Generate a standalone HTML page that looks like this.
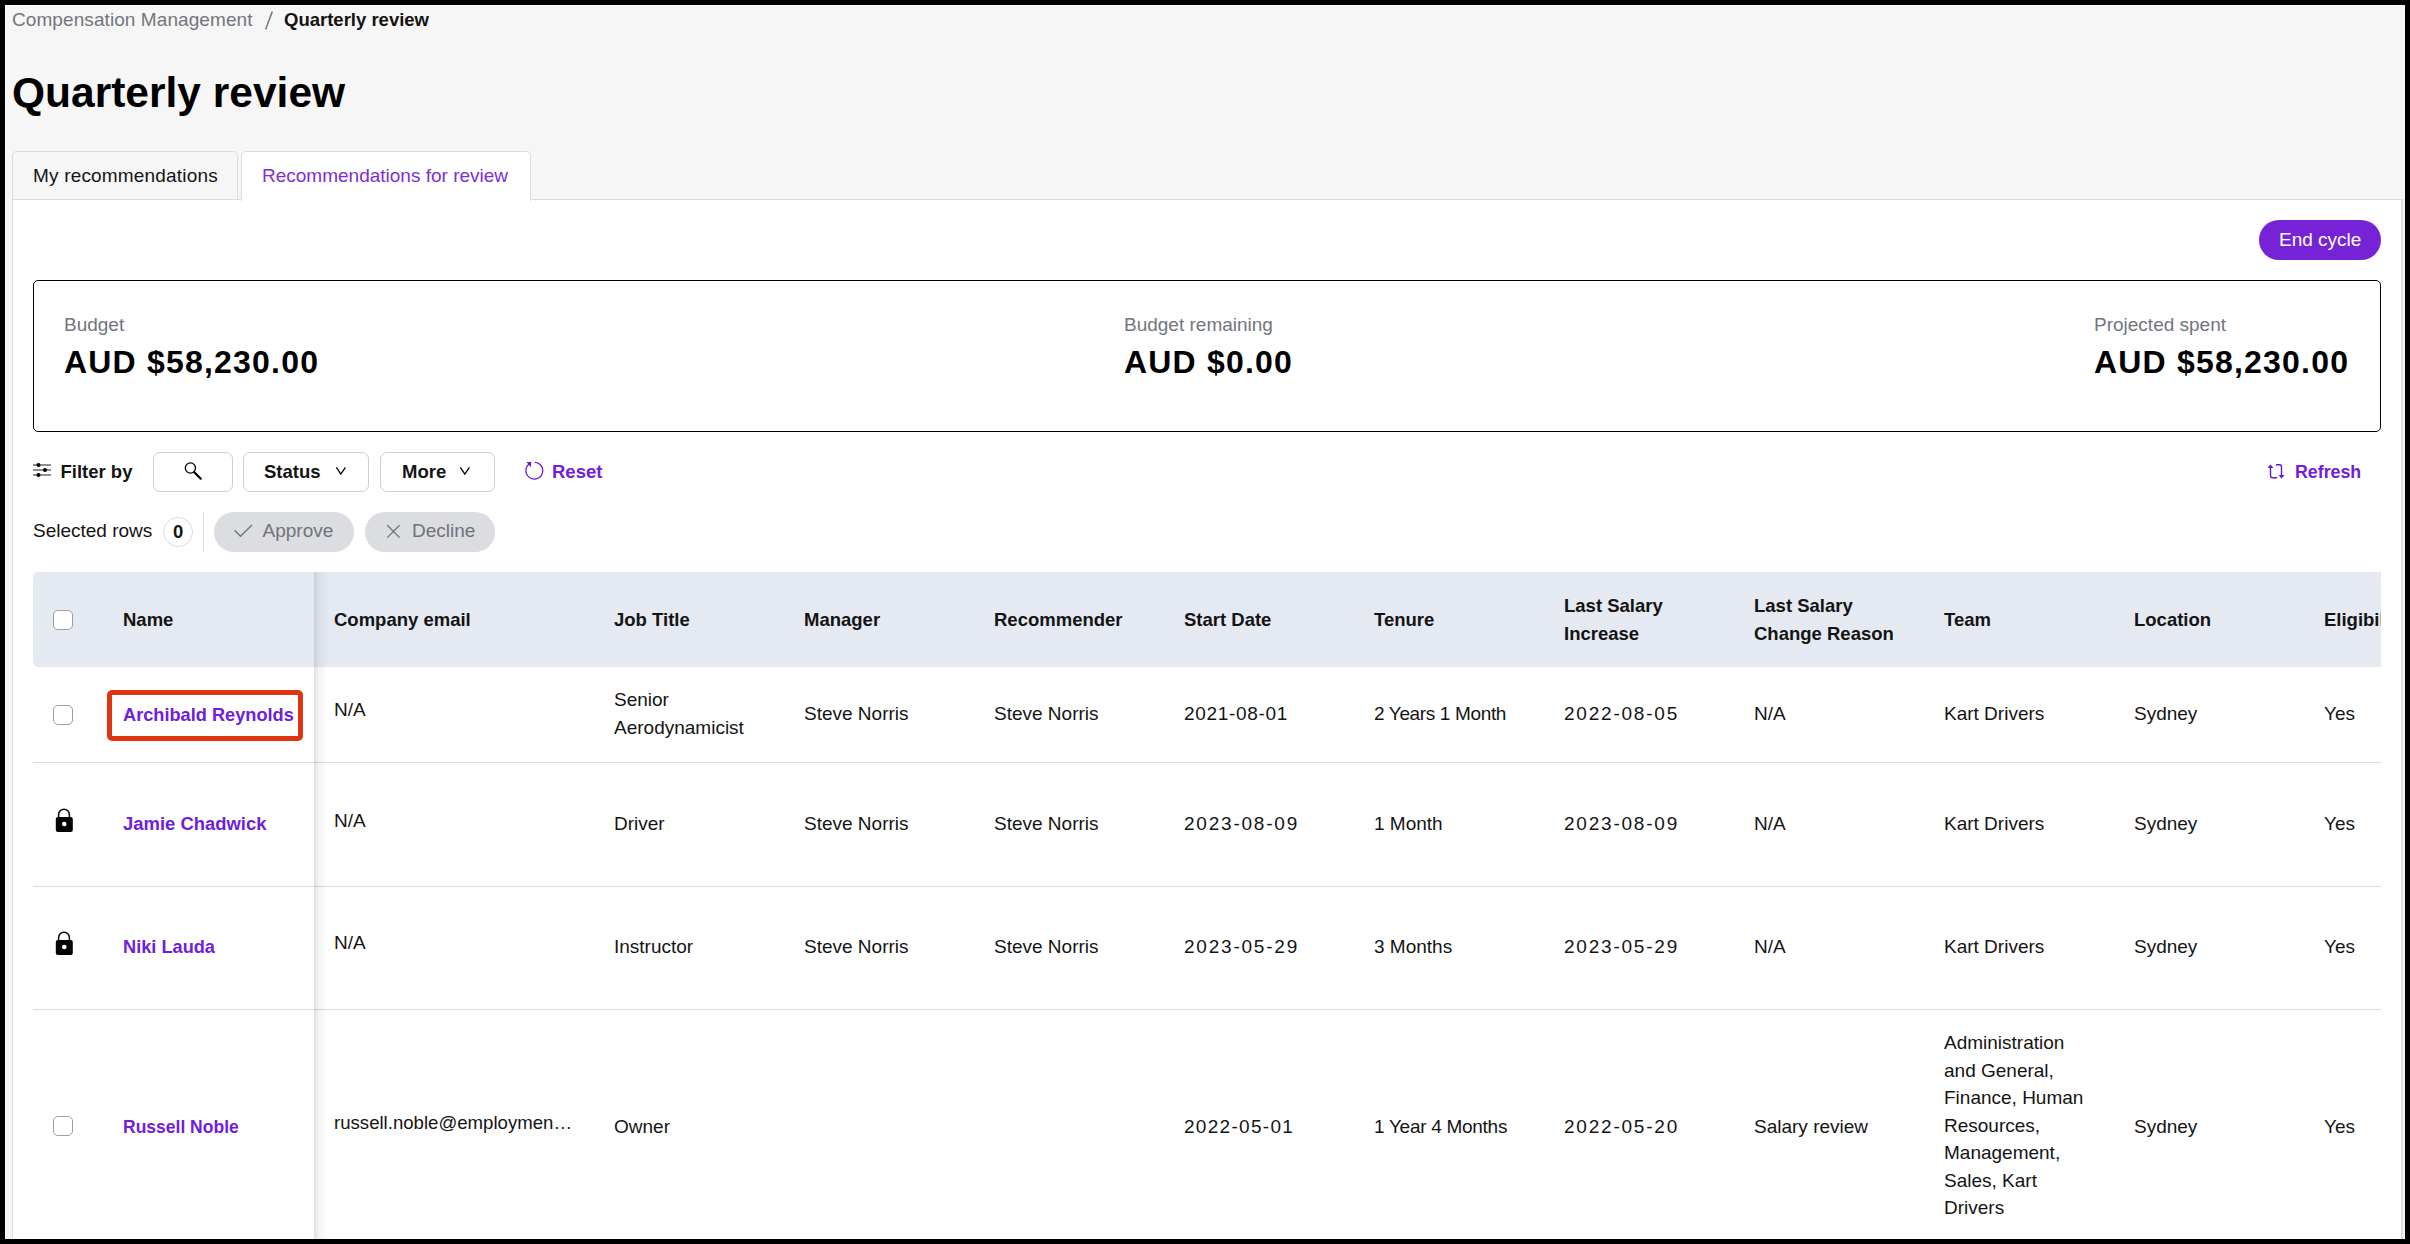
<!DOCTYPE html>
<html><head><meta charset="utf-8"><title>Quarterly review</title>
<style>
*{box-sizing:border-box;margin:0;padding:0}
html,body{width:2410px;height:1244px;overflow:hidden;background:#000}
body{font-family:"Liberation Sans",sans-serif;color:#141414;position:relative}
#win{position:absolute;left:5px;top:5px;width:2400px;height:1234px;background:#f6f6f6;border-top:1px solid #fff;border-left:1px solid #fff;overflow:hidden}
.a{position:absolute;white-space:nowrap;line-height:28px;font-size:19px}
.b{font-weight:700;font-size:18.5px}
.g{color:#72757d}
.p{color:#7020d8}
.nm{font-size:18.2px}
.panel{position:absolute;left:12px;top:199px;width:2390px;height:1100px;background:#fff;border:1px solid #dcdce0}
.tab{position:absolute;top:151px;height:48px;border:1px solid #dcdce0;border-bottom:none;border-radius:5px 5px 0 0}
.btnp{position:absolute;left:2259px;top:220px;width:122px;height:40px;border-radius:20px;background:#7622d7}
.card{position:absolute;left:33px;top:280px;width:2348px;height:152px;border:1.3px solid #000;border-radius:5px}
.box{position:absolute;top:452px;height:40px;border:1px solid #cfcfd3;border-radius:7px;background:#fff}
.pill{position:absolute;top:512px;height:40px;border-radius:20px;background:#dcdde1}
.thead{position:absolute;left:33px;top:572px;width:2348px;height:95px;background:#e5e9f1;border-radius:5px 0 0 5px}
.hr{position:absolute;left:33px;width:2348px;height:1px;background:#dcdce0}
.cb{position:absolute;left:53px;width:20px;height:20px;border:1.3px solid #9a9ea6;border-radius:5px;background:#fff}
.shadow{position:absolute;left:314px;top:572px;width:14px;height:700px;background:linear-gradient(to right,rgba(0,0,0,0.12),rgba(0,0,0,0.05) 30%,rgba(0,0,0,0) 100%)}
svg{position:absolute;overflow:visible}
</style></head><body>
<div id="win"></div>
<!-- breadcrumb -->
<div class="a g" style="left:12px;top:5.5px;letter-spacing:0.08px">Compensation Management</div>
<svg style="left:264px;top:10px" width="10" height="21" viewBox="0 0 10 21"><path d="M1.6 19.6L8.3 1.4" stroke="#72757d" stroke-width="1.5"/></svg>
<div class="a b" style="left:284px;top:5.7px">Quarterly review</div>
<!-- title -->
<div class="a" style="left:12px;top:67.7px;font-size:42.5px;line-height:50px;font-weight:700;color:#000">Quarterly review</div>
<!-- tabs -->
<div class="panel"></div>
<div class="tab" style="left:12px;width:226px;background:#f6f6f6"></div>
<div class="tab" style="left:241px;width:290px;background:#fff;height:50px"></div>
<div class="a" style="left:33px;top:161.7px;letter-spacing:0.18px">My recommendations</div>
<div class="a p" style="left:262px;top:161.7px;color:#7a2fd9">Recommendations for review</div>
<!-- end cycle -->
<div class="btnp"></div>
<div class="a" style="left:2279px;top:226.4px;color:#fff">End cycle</div>
<!-- card -->
<div class="card"></div>
<div class="a g" style="left:64px;top:310.5px">Budget</div>
<div class="a" style="left:64px;top:341.8px;font-size:32px;line-height:40px;font-weight:700;letter-spacing:1.2px;color:#000">AUD $58,230.00</div>
<div class="a g" style="left:1124px;top:310.5px">Budget remaining</div>
<div class="a" style="left:1124px;top:341.8px;font-size:32px;line-height:40px;font-weight:700;letter-spacing:1.2px;color:#000">AUD $0.00</div>
<div class="a g" style="left:2094px;top:310.5px">Projected spent</div>
<div class="a" style="left:2094px;top:341.8px;font-size:32px;line-height:40px;font-weight:700;letter-spacing:1.2px;color:#000">AUD $58,230.00</div>
<!-- filter row -->
<svg style="left:33px;top:462px" width="18" height="16" viewBox="0 0 18 16">
 <path d="M0 3h18M0 8h18M0 13h18" stroke="#6b6b6b" stroke-width="1.6"/>
 <circle cx="5.5" cy="3" r="2" fill="#000"/><circle cx="12" cy="8" r="2" fill="#000"/><circle cx="5.5" cy="13" r="2" fill="#000"/>
</svg>
<div class="a b" style="left:60.5px;top:458px">Filter by</div>
<div class="box" style="left:153px;width:80px"></div>
<svg style="left:184px;top:462px" width="18" height="18" viewBox="0 0 18 18">
 <circle cx="6.4" cy="6" r="5.1" fill="none" stroke="#000" stroke-width="1.3"/>
 <path d="M10.3 10.2L16.8 16.7" stroke="#000" stroke-width="2.2" stroke-linecap="round"/>
</svg>
<div class="box" style="left:243px;width:126px"></div>
<div class="a b" style="left:264px;top:458px">Status</div>
<svg style="left:336px;top:467px" width="10" height="8" viewBox="0 0 10 8"><path d="M0.4 0.4L4.8 7L9.4 0.4" fill="none" stroke="#000" stroke-width="1.3"/></svg>
<div class="box" style="left:380px;width:115px"></div>
<div class="a b" style="left:402px;top:458px">More</div>
<svg style="left:460px;top:467px" width="10" height="8" viewBox="0 0 10 8"><path d="M0.4 0.4L4.8 7L9.4 0.4" fill="none" stroke="#000" stroke-width="1.3"/></svg>
<svg style="left:524px;top:461px" width="20" height="20" viewBox="0 0 20 20">
 <path d="M11 1.3A8.4 8.4 0 1 1 6.3 2.3" fill="none" stroke="#6a12d8" stroke-width="1.25"/>
 <path d="M2.4 1H7.2L6.8 6.2Z" fill="#6a12d8"/>
</svg>
<div class="a b p" style="left:552px;top:458px">Reset</div>
<svg style="left:2267px;top:464px" width="18" height="15" viewBox="0 0 18 15">
 <path d="M3.5 2V11.5Q3.5 13.7 5.5 13.7H10" fill="none" stroke="#6a12d8" stroke-width="1.4"/>
 <path d="M0.5 4L3.5 0.5L6.5 4Z" fill="#6a12d8"/>
 <path d="M9 0.8H12.5Q14.5 0.8 14.5 3V12.5" fill="none" stroke="#6a12d8" stroke-width="1.4"/>
 <path d="M11.5 11L14.5 14.5L17.5 11Z" fill="#6a12d8"/>
</svg>
<div class="a b p" style="left:2295px;top:458px;font-size:17.8px">Refresh</div>
<!-- selected row -->
<div class="a" style="left:33px;top:517.3px">Selected rows</div>
<div style="position:absolute;left:163px;top:517px;width:30px;height:30px;border:1px solid #dcdce0;border-radius:50%;background:#fff"></div>
<div class="a b" style="left:173px;top:517.5px">0</div>
<div style="position:absolute;left:203px;top:512px;width:1px;height:40px;background:#dcdce0"></div>
<div class="pill" style="left:214px;width:140px"></div>
<svg style="left:234px;top:524px" width="19" height="13" viewBox="0 0 19 13"><path d="M0.6 6.3L6.5 12.3L18 1" fill="none" stroke="#6f727a" stroke-width="1.3"/></svg>
<div class="a" style="left:262.5px;top:517.3px;color:#6f727a">Approve</div>
<div class="pill" style="left:365px;width:130px"></div>
<svg style="left:387px;top:524.5px" width="13" height="13" viewBox="0 0 13 13"><path d="M0.3 0.3L12.6 12.6M12.6 0.3L0.3 12.6" fill="none" stroke="#6f727a" stroke-width="1.3"/></svg>
<div class="a" style="left:412px;top:517.3px;color:#6f727a">Decline</div>
<!-- table -->
<div class="thead"></div>
<div class="hr" style="top:762px"></div>
<div class="hr" style="top:886px"></div>
<div class="hr" style="top:1009px"></div>
<div class="shadow"></div>
<div class="cb" style="top:610px"></div>
<div class="a b" style="left:123px;top:605.8px">Name</div>
<div class="a b" style="left:334px;top:605.8px">Company email</div>
<div class="a b" style="left:614px;top:605.8px">Job Title</div>
<div class="a b" style="left:804px;top:605.8px">Manager</div>
<div class="a b" style="left:994px;top:605.8px">Recommender</div>
<div class="a b" style="left:1184px;top:605.8px">Start Date</div>
<div class="a b" style="left:1374px;top:605.8px">Tenure</div>
<div class="a b" style="left:1564px;top:592.1px">Last Salary<br>Increase</div>
<div class="a b" style="left:1754px;top:592.1px">Last Salary<br>Change Reason</div>
<div class="a b" style="left:1944px;top:605.8px">Team</div>
<div class="a b" style="left:2134px;top:605.8px">Location</div>
<div style="position:absolute;left:2324px;top:572px;width:57px;height:95px;overflow:hidden"><div class="a b" style="left:0;top:33.8px">Eligibility</div></div>

<!-- row 1 -->
<div class="cb" style="top:705px"></div>
<div style="position:absolute;left:107px;top:690px;width:196px;height:51px;border:5px solid #dd3510;border-radius:5px"></div>
<div class="a b p nm" style="left:123px;top:700.5px">Archibald Reynolds</div>
<div class="a" style="left:334px;top:696.2px">N/A</div>
<div class="a" style="left:614px;top:686px">Senior<br>Aerodynamicist</div>
<div class="a" style="left:804px;top:700px">Steve Norris</div>
<div class="a" style="left:994px;top:700px">Steve Norris</div>
<div class="a" style="left:1184px;top:700px;letter-spacing:0.69px">2021-08-01</div>
<div class="a" style="left:1374px;top:700px;letter-spacing:-0.35px">2 Years 1 Month</div>
<div class="a" style="left:1564px;top:700px;letter-spacing:1.78px">2022-08-05</div>
<div class="a" style="left:1754px;top:700px">N/A</div>
<div class="a" style="left:1944px;top:700px">Kart Drivers</div>
<div class="a" style="left:2134px;top:700px">Sydney</div>
<div class="a" style="left:2324px;top:700px">Yes</div>

<!-- row 2 -->
<svg style="left:55px;top:808px" width="18" height="25" viewBox="0 0 18 25">
 <path d="M3.6 9.5V6.6A5.4 5.4 0 0 1 14.4 6.6V9.5" fill="none" stroke="#000" stroke-width="1.5"/>
 <rect x="0.8" y="9" width="17" height="15" rx="2" fill="#000"/>
 <circle cx="9.3" cy="16" r="2.3" fill="#fff"/>
</svg>
<div class="a b p nm" style="left:123px;top:810.4px;font-size:18.45px">Jamie Chadwick</div>
<div class="a" style="left:334px;top:806.6px">N/A</div>
<div class="a" style="left:614px;top:810.3px">Driver</div>
<div class="a" style="left:804px;top:810.3px">Steve Norris</div>
<div class="a" style="left:994px;top:810.3px">Steve Norris</div>
<div class="a" style="left:1184px;top:810.3px;letter-spacing:1.78px">2023-08-09</div>
<div class="a" style="left:1374px;top:810.3px">1 Month</div>
<div class="a" style="left:1564px;top:810.3px;letter-spacing:1.78px">2023-08-09</div>
<div class="a" style="left:1754px;top:810.3px">N/A</div>
<div class="a" style="left:1944px;top:810.3px">Kart Drivers</div>
<div class="a" style="left:2134px;top:810.3px">Sydney</div>
<div class="a" style="left:2324px;top:810.3px">Yes</div>

<!-- row 3 -->
<svg style="left:55px;top:931px" width="18" height="25" viewBox="0 0 18 25">
 <path d="M3.6 9.5V6.6A5.4 5.4 0 0 1 14.4 6.6V9.5" fill="none" stroke="#000" stroke-width="1.5"/>
 <rect x="0.8" y="9" width="17" height="15" rx="2" fill="#000"/>
 <circle cx="9.3" cy="16" r="2.3" fill="#fff"/>
</svg>
<div class="a b p nm" style="left:123px;top:933.4px">Niki Lauda</div>
<div class="a" style="left:334px;top:929.4px">N/A</div>
<div class="a" style="left:614px;top:933.1px">Instructor</div>
<div class="a" style="left:804px;top:933.1px">Steve Norris</div>
<div class="a" style="left:994px;top:933.1px">Steve Norris</div>
<div class="a" style="left:1184px;top:933.1px;letter-spacing:1.78px">2023-05-29</div>
<div class="a" style="left:1374px;top:933.1px">3 Months</div>
<div class="a" style="left:1564px;top:933.1px;letter-spacing:1.78px">2023-05-29</div>
<div class="a" style="left:1754px;top:933.1px">N/A</div>
<div class="a" style="left:1944px;top:933.1px">Kart Drivers</div>
<div class="a" style="left:2134px;top:933.1px">Sydney</div>
<div class="a" style="left:2324px;top:933.1px">Yes</div>

<!-- row 4 -->
<div class="cb" style="top:1116px"></div>
<div class="a b p nm" style="left:123px;top:1112.6px;font-size:17.5px">Russell Noble</div>
<div class="a" style="left:334px;top:1109.2px;font-size:18.6px">russell.noble@employmen…</div>
<div class="a" style="left:614px;top:1112.8px">Owner</div>
<div class="a" style="left:1184px;top:1112.8px;letter-spacing:1.30px">2022-05-01</div>
<div class="a" style="left:1374px;top:1112.8px;letter-spacing:-0.28px">1 Year 4 Months</div>
<div class="a" style="left:1564px;top:1112.8px;letter-spacing:1.78px">2022-05-20</div>
<div class="a" style="left:1754px;top:1112.8px">Salary review</div>
<div class="a" style="left:1944px;top:1029.4px;line-height:27.5px">Administration<br>and General,<br>Finance, Human<br>Resources,<br>Management,<br>Sales, Kart<br>Drivers</div>
<div class="a" style="left:2134px;top:1112.8px">Sydney</div>
<div class="a" style="left:2324px;top:1112.8px">Yes</div>

<!-- window frame overlay -->
<div style="position:absolute;left:0;top:1239px;width:2410px;height:5px;background:#000"></div>
<div style="position:absolute;left:2401px;top:199px;width:2px;height:1040px;background:#dfdfe2"></div>
<div style="position:absolute;left:2403px;top:5px;width:2px;height:1234px;background:#f6f6f6"></div>
<div style="position:absolute;left:2405px;top:0;width:5px;height:1244px;background:#000"></div>
</body></html>
